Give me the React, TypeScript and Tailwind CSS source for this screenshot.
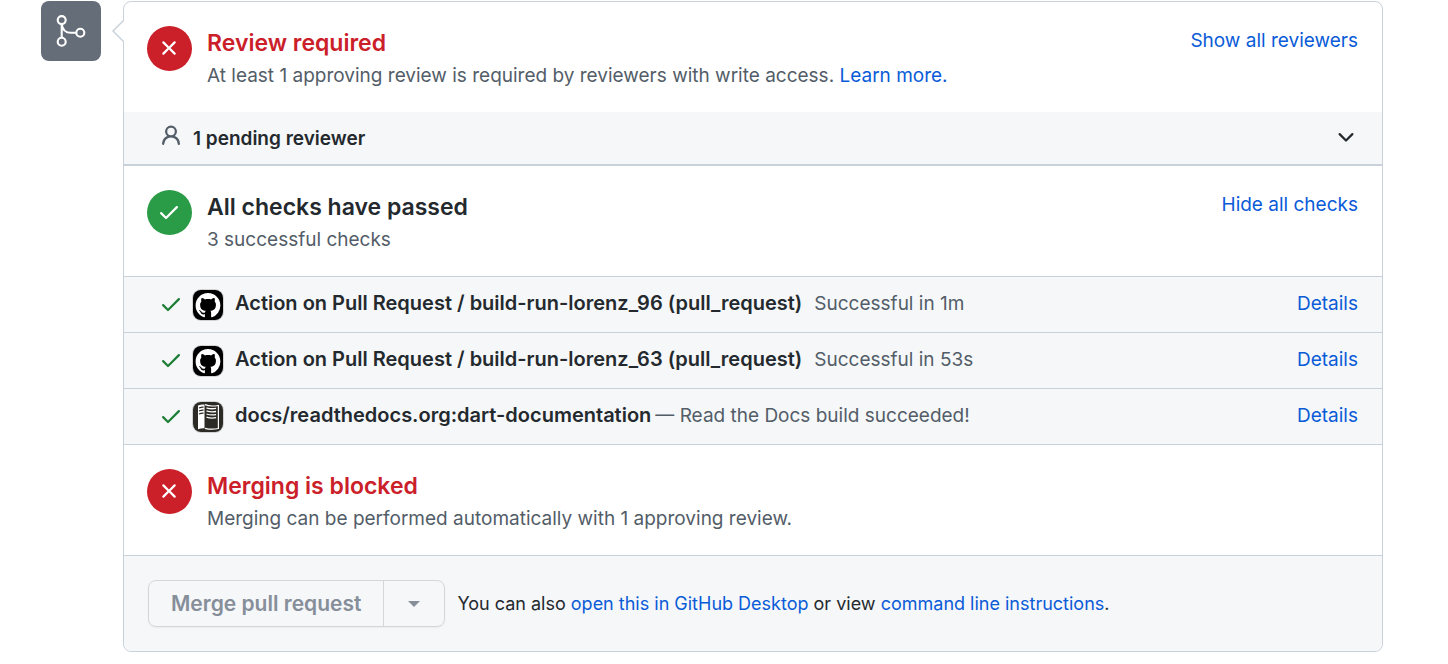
import React from "react";

const X_PATH =
  "M3.72 3.72a.75.75 0 011.06 0L8 6.94l3.22-3.22a.75.75 0 111.06 1.06L9.06 8l3.22 3.22a.75.75 0 11-1.06 1.06L8 9.06l-3.22 3.22a.75.75 0 01-1.06-1.06L6.94 8 3.72 4.78a.75.75 0 010-1.06z";
const CHECK_PATH =
  "M13.78 4.22a.75.75 0 010 1.06l-7.25 7.25a.75.75 0 01-1.06 0L2.22 9.28a.75.75 0 011.06-1.06L6 10.94l6.72-6.72a.75.75 0 011.06 0z";
const PERSON_PATH =
  "M10.5 5a2.5 2.5 0 11-5 0 2.5 2.5 0 015 0zm.061 3.073a4 4 0 10-5.123 0 6.004 6.004 0 00-3.431 5.142.75.75 0 001.498.07 4.5 4.5 0 018.99 0 .75.75 0 101.498-.07 6.005 6.005 0 00-3.432-5.142z";
const CHEVRON_PATH =
  "M12.78 6.22a.75.75 0 010 1.06l-4.25 4.25a.75.75 0 01-1.06 0L3.22 7.28a.75.75 0 011.06-1.06L8 9.94l3.72-3.72a.75.75 0 011.06 0z";
const MARK_PATH =
  "M8 0C3.58 0 0 3.58 0 8c0 3.54 2.29 6.53 5.47 7.59.4.07.55-.17.55-.38 0-.19-.01-.82-.01-1.49-2.01.37-2.53-.49-2.69-.94-.09-.23-.48-.94-.82-1.13-.28-.15-.68-.52-.01-.53.63-.01 1.08.58 1.23.82.72 1.21 1.87.87 2.33.66.07-.52.28-.87.51-1.07-1.78-.2-3.64-.89-3.64-3.95 0-.87.31-1.59.82-2.15-.08-.2-.36-1.02.08-2.12 0 0 .67-.21 2.2.82.64-.18 1.32-.27 2-.27s1.36.09 2 .27c1.53-1.04 2.2-.82 2.2-.82.44 1.1.16 1.92.08 2.12.51.56.82 1.27.82 2.15 0 3.07-1.87 3.75-3.65 3.95.29.25.54.73.54 1.48 0 1.07-.01 1.93-.01 2.2 0 .21.15.46.55.38A8.01 8.01 0 0016 8c0-4.42-3.58-8-8-8z";

function Icon({ path, className }: { path: string; className: string }) {
  return (
    <svg viewBox="0 0 16 16" fill="currentColor" aria-hidden="true" className={className}>
      <path fillRule="evenodd" d={path} />
    </svg>
  );
}

function MergeIcon() {
  return (
    <svg
      viewBox="0 0 36 36"
      fill="none"
      stroke="currentColor"
      strokeWidth="2.1"
      aria-hidden="true"
      className="size-9"
    >
      <circle cx="8.7" cy="7.1" r="4" />
      <circle cx="8.7" cy="28.8" r="4" />
      <circle cx="27.3" cy="19.8" r="4" />
      <path d="M8.7 11v14M8.7 11c.6 5.4 4 8.8 9.3 8.8h5.3" />
    </svg>
  );
}

function GitHubAvatar() {
  return (
    <svg viewBox="0 0 30 30" aria-hidden="true" className="size-[30px] rounded-lg ring-1 ring-black/15">
      <rect width="30" height="30" fill="#000" />
      <g transform="translate(2.6 3) scale(1.55)">
        <path fill="#fff" d={MARK_PATH} />
      </g>
    </svg>
  );
}

function DocsAvatar() {
  return (
    <svg
      viewBox="0 0 30 30"
      fill="none"
      aria-hidden="true"
      className="size-[30px] rounded-lg ring-1 ring-black/15"
    >
      <rect width="30" height="30" fill="#2b2a24" />
      <path fill="#fff" d="M5 3.5c2.5-1 4.500-1.300 6.500-1V26.300c-2-.2-4 .1-6.500 1z" />
      <path
        stroke="#2b2a24"
        strokeWidth="1.3"
        d="M6 6c1.700-.7 3-.9 4.600-.8M6 9c1.700-.7 3-.9 4.600-.8M6 12c1.700-.7 3-.9 4.600-.8"
      />
      <path stroke="#fff" strokeWidth="1.2" d="M12 2.600c4 1.800 8 1.800 13.400.9v23c-5 1-9 1-13.400-.2" />
      <path
        stroke="#fff"
        strokeWidth="1.3"
        d="M13.500 5.800c3.200 1.200 6 1.200 9.600.6M13.500 8.900c3.200 1.200 6 1.200 9.600.6M13.500 12c3.200 1.200 6 1.200 9.600.6M13.500 15.100c3.200 1.200 6 1.200 9.600.6"
      />
    </svg>
  );
}

const linkClass = "text-[#0a5bd8] hover:underline";

type SectionProps = {
  status: "error" | "success";
  title: string;
  titleClass: string;
  children: React.ReactNode;
  action?: string;
};

function Section({ status, title, titleClass, children, action }: SectionProps) {
  return (
    <section className="flex items-start pt-6 pr-6 pb-[21px] pl-[23px]">
      <span
        className={
          status === "error"
            ? "size-[45px] shrink-0 rounded-full bg-[#cb2029] p-[10px] text-white"
            : "size-[45px] shrink-0 rounded-full bg-[#2a9b46] p-[10px] text-white"
        }
      >
        <Icon path={status === "error" ? X_PATH : CHECK_PATH} className="size-6" />
      </span>
      <div className="ml-[15px] grow">
        <h2 className={titleClass}>{title}</h2>
        <p className="mt-px text-[19px] leading-[30px] text-[#535d68]">{children}</p>
      </div>
      {action && (
        <button type="button" className="text-[19px] leading-[30px] text-[#0a5bd8] hover:underline">
          {action}
        </button>
      )}
    </section>
  );
}

const redTitle = "text-[23px] leading-[34px] font-semibold text-[#cb2029]";
const darkTitle = "text-[23px] leading-[34px] font-semibold text-[#24292e]";

const checks = [
  {
    name: "Action on Pull Request / build-run-lorenz_96 (pull_request)",
    note: "Successful in 1m",
    docs: false,
  },
  {
    name: "Action on Pull Request / build-run-lorenz_63 (pull_request)",
    note: "Successful in 53s",
    docs: false,
  },
  {
    name: "docs/readthedocs.org:dart-documentation",
    note: "— Read the Docs build succeeded!",
    docs: true,
  },
];

export default function App() {
  return (
    <main className="flex items-start bg-white pt-px pr-[65px] pb-3 pl-[41px] font-['Inter',sans-serif] text-[#24292e]">
      <div className="flex size-[60px] shrink-0 items-center justify-center rounded-lg bg-[#656d78] text-white">
        <MergeIcon />
      </div>
      <div className="relative ml-[22px] grow rounded-lg border border-[#c9d1da]">
        <svg
          viewBox="0 0 12 24"
          aria-hidden="true"
          className="absolute top-[17px] -left-3 h-6 w-3"
        >
          <path d="M12 1L1 12l11 11" fill="#fff" stroke="#c9d1da" strokeWidth="1.5" />
        </svg>

        <Section
          status="error"
          title="Review required"
          titleClass={redTitle}
          action="Show all reviewers"
        >
          At least 1 approving review is required by reviewers with write access.{" "}
          <a href="#reviews" className={linkClass}>
            Learn more.
          </a>
        </Section>

        <button
          type="button"
          className="flex h-[54px] w-full items-center border-b-2 border-[#c9d1da] bg-[#f5f7f9] pr-6 pl-[35px] text-left"
        >
          <Icon path={PERSON_PATH} className="mb-1 size-6 text-[#535d68]" />
          <span className="ml-[10px] grow pt-0.5 text-[19px] leading-[30px] font-semibold">
            1 pending reviewer
          </span>
          <Icon path={CHEVRON_PATH} className="mb-1 size-6" />
        </button>

        <Section
          status="success"
          title="All checks have passed"
          titleClass={darkTitle}
          action="Hide all checks"
        >
          3 successful checks
        </Section>

        <ul className="border-b border-[#c9d1da] bg-[#f5f7f9]">
          {checks.map((check) => (
            <li
              key={check.name}
              className="flex h-14 items-center border-t border-[#c9d1da] pr-6 pl-[35px]"
            >
              <Icon path={CHECK_PATH} className="mb-0.5 size-6 shrink-0 text-[#1f7f37]" />
              <span className="mr-3 ml-[10px] shrink-0">
                {check.docs ? <DocsAvatar /> : <GitHubAvatar />}
              </span>
              <p className="grow pb-[3px] text-[19px] leading-[30px] text-[#535d68]">
                <strong className="text-[20px] font-semibold text-[#24292e]">{check.name}</strong>
                <span className={check.docs ? "ml-1" : "ml-3"}>{check.note}</span>
              </p>
              <a
                href="#details"
                className="pb-px text-[19px] leading-[30px] text-[#0a5bd8] hover:underline"
              >
                Details
              </a>
            </li>
          ))}
        </ul>

        <Section status="error" title="Merging is blocked" titleClass={redTitle}>
          Merging can be performed automatically with 1 approving review.
        </Section>

        <footer className="flex items-center rounded-b-lg border-t border-[#c9d1da] bg-[#f5f7f9] p-6">
          <div className="flex h-[47px] shrink-0 rounded-lg border border-[#d3d7db] text-[#868e99] shadow-xs">
            <button type="button" disabled className="px-[22px] text-[21px] leading-7 font-semibold">
              Merge pull request
            </button>
            <button
              type="button"
              disabled
              aria-label="Select merge method"
              className="flex w-[61px] items-center justify-center border-l border-[#d3d7db]"
            >
              <svg viewBox="0 0 12 6" fill="currentColor" aria-hidden="true" className="h-[6px] w-3">
                <path d="M0 0h12L6 6z" />
              </svg>
            </button>
          </div>
          <p className="ml-3 text-lg leading-7">
            You can also{" "}
            <a href="#desktop" className={linkClass}>
              open this in GitHub Desktop
            </a>{" "}
            or view{" "}
            <a href="#command-line" className={linkClass}>
              command line instructions
            </a>
            .
          </p>
        </footer>
      </div>
    </main>
  );
}
